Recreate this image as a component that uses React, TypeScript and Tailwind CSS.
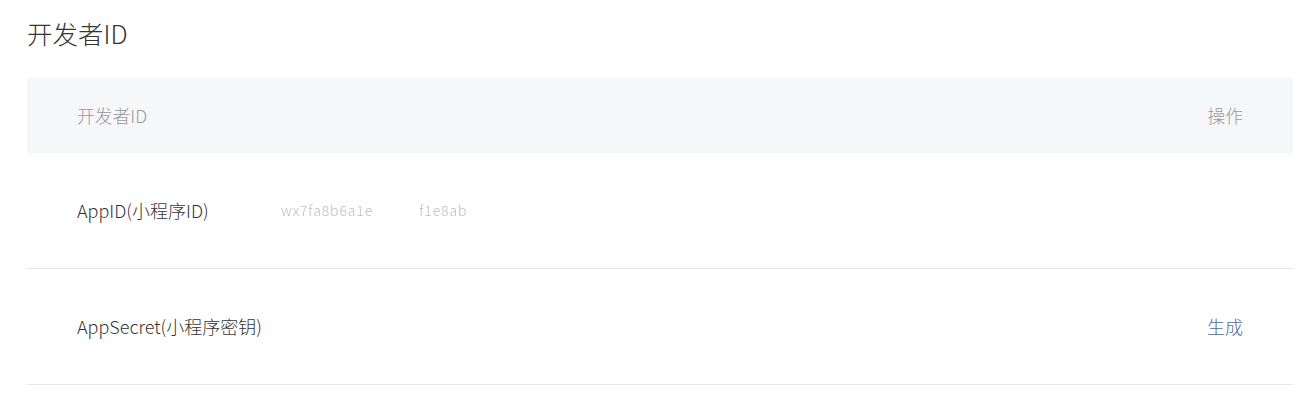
const font = { fontFamily: '"Noto Sans CJK SC", "Liberation Sans", sans-serif' }

const rows = [
  { label: "AppID(小程序ID)", value: true, action: "" },
  { label: "AppSecret(小程序密钥)", value: false, action: "生成" },
]

export default function App() {
  return (
    <div className="min-h-screen bg-white pl-[27px] pr-[14px] pt-[16px]" style={font}>
      <h2 className="text-[25.5px] leading-[34px] font-light text-[#353535]">开发者ID</h2>

      <div className="mt-[28px]">
        <div className="flex h-[75px] items-center justify-between bg-[#f6f7f9] px-[50px] text-[17.8px] font-light text-[#9a9a9a]">
          <span>开发者ID</span>
          <span>操作</span>
        </div>

        {rows.map((row) => (
          <div
            key={row.label}
            className="flex h-[116px] items-center border-b border-[#e7e7eb] px-[50px] text-[18px] font-light text-[#353535]"
          >
            <span className="w-[204px] shrink-0">{row.label}</span>
            <span className="flex flex-1 items-center">
              {row.value && (
                <span className="flex items-center gap-[46px] text-[14px] tracking-[0.9px] text-[#a0a0a0] opacity-70 blur-[0.5px]">
                  <span>wx7fa8b6a1e</span>
                  <span>f1e8ab</span>
                </span>
              )}
            </span>
            {row.action && <a className="cursor-pointer text-[#576b95]">{row.action}</a>}
          </div>
        ))}
      </div>
    </div>
  )
}
